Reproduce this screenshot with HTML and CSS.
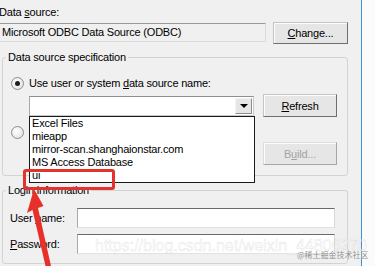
FILE: index.html
```html
<!DOCTYPE html>
<html lang="en">
<head>
    <meta charset="UTF-8">
    <meta name="viewport" content="width=device-width, initial-scale=1.0">
    <title>ODBC Data Source</title>
    <link rel="stylesheet" href="styles.css">
</head>
<body>
    <div class="window">
        <div class="dialog">
            <div class="top-label">Data <u>s</u>ource:</div>
            <div class="source-row">
                <div class="source-field">Microsoft ODBC Data Source (ODBC)</div>
                <button class="btn change-btn"><u>C</u>hange...</button>
            </div>

            <fieldset class="group spec-group">
                <legend>Data source specification</legend>
                <div class="group-body">
                    <div class="radio-row">
                        <span class="radio checked"></span>
                        <span class="radio-label">Use user or system <u>d</u>ata source name:</span>
                    </div>
                    <div class="combo-row">
                        <div class="combo">
                            <div class="combo-text"></div>
                            <div class="combo-arrow"><span class="arrow-down"></span></div>
                            <ul class="combo-list">
                                <li>Excel Files</li>
                                <li>mieapp</li>
                                <li>mirror-scan.shanghaionstar.com</li>
                                <li>MS Access Database</li>
                                <li>ui</li>
                            </ul>
                        </div>
                        <button class="btn side-btn"><u>R</u>efresh</button>
                    </div>
                    <div class="radio-row second">
                        <span class="radio"></span>
                    </div>
                    <div class="combo-row build-row">
                        <div class="hidden-field"></div>
                        <button class="btn side-btn" disabled>B<u>u</u>ild...</button>
                    </div>
                </div>
            </fieldset>

            <fieldset class="group login-group">
                <legend>Login information</legend>
                <div class="group-body">
                    <div class="login-row">
                        <label class="login-label">User <u>n</u>ame:</label>
                        <div class="text-input"></div>
                    </div>
                    <div class="login-row">
                        <label class="login-label"><u>P</u>assword:</label>
                        <div class="text-input"></div>
                    </div>
                </div>
            </fieldset>

            <div class="mark-box"></div>
            <svg class="mark-arrow" width="361" height="266" viewBox="0 0 361 266">
                <path d="M34 189 L27 213 L32.5 210 L45.5 266 L51 266 L38 208 L43.5 206 Z" fill="#e8302a"/>
            </svg>
            <div class="watermark">https://blog.csdn.net/weixin_44806270</div>
        </div>
        <div class="frame-edge"></div>
        <div class="outside"></div>
        <div class="credit">@稀土掘金技术社区</div>
    </div>
</body>
</html>
```

FILE: styles.css
```css
body, html {
    margin: 0;
    padding: 0;
}

body {
    width: 375px;
    height: 266px;
    overflow: hidden;
    background-color: #f0f0f0;
    font-family: "Liberation Sans", Arial, sans-serif;
    font-size: 11px;
    letter-spacing: -0.2px;
    color: #000;
}

.window {
    display: flex;
    height: 266px;
    position: relative;
}

.dialog {
    width: 361px;
    position: relative;
}

.frame-edge {
    width: 1px;
    background-color: #3f8dd8;
}

.outside {
    flex: 1;
    background-color: #fbfbfb;
}

u {
    text-decoration: underline;
    text-underline-offset: 1px;
}

.top-label {
    padding-top: 6px;
    margin-left: -1px;
    line-height: 13px;
}

.source-row {
    display: flex;
    align-items: flex-start;
    margin-top: 3px;
}

.source-field {
    margin-left: -3px;
    margin-top: 1px;
    width: 269px;
    height: 19px;
    box-sizing: border-box;
    border: 1px solid;
    border-color: #9a9a9a #dadada #dadada #b5b5b5;
    background-color: #f0f0f0;
    padding-left: 4px;
    line-height: 17px;
    white-space: nowrap;
}

.btn {
    font-family: inherit;
    font-size: 11px;
    letter-spacing: -0.2px;
    color: #000;
    height: 23px;
    padding: 0;
    box-sizing: border-box;
    border: 1px solid;
    border-color: #c4c4c4 #6f6f6f #6f6f6f #c4c4c4;
    background-color: #e6e6e6;
    box-shadow: inset 1px 1px 0 #fdfdfd;
}

.btn:disabled {
    color: #a3a3a3;
    border-color: #dcdcdc #a6a6a6 #a6a6a6 #dcdcdc;
}

.change-btn {
    margin-left: 7px;
    width: 75px;
    height: 22px;
}

/* group boxes */
.group {
    margin: 6px 0 0 2px;
    width: 346px;
    box-sizing: border-box;
    padding: 0;
    border: 1px solid #d3d3d3;
    border-radius: 3px;
    min-inline-size: 0;
}

.group legend {
    margin-left: 3px;
    padding: 0 2px;
    line-height: 14px;
}

.spec-group .group-body {
    padding: 13px 10px 10px 8px;
}

.radio-row {
    display: flex;
    align-items: center;
    height: 13px;
}

.radio-row.second {
    margin-top: 9px;
}

.radio {
    width: 13px;
    height: 13px;
    box-sizing: border-box;
    border: 1px solid #8d8d8d;
    border-radius: 50%;
    background: radial-gradient(circle at 40% 40%, #ffffff, #dcdcdc);
    display: flex;
    align-items: center;
    justify-content: center;
}

.radio.checked::after {
    content: "";
    width: 5px;
    height: 5px;
    border-radius: 50%;
    background-color: #1c1c1c;
}

.radio-label {
    margin-left: 5px;
    line-height: 13px;
    white-space: nowrap;
}

.combo-row {
    display: flex;
    align-items: flex-start;
    margin-top: 4px;
}

.combo-row.build-row {
    margin-top: 3px;
}

.combo {
    position: relative;
    margin-left: 18px;
    margin-top: 2px;
    width: 225px;
    height: 20px;
    box-sizing: border-box;
    border: 1px solid;
    border-color: #8f8f8f #c9c9c9 #c9c9c9 #a8a8a8;
    background-color: #fff;
    display: flex;
}

.combo-text {
    flex: 1;
}

.combo-arrow {
    width: 17px;
    box-sizing: border-box;
    margin: 1px;
    border: 1px solid;
    border-color: #f4f4f4 #8c8c8c #8c8c8c #f4f4f4;
    background-color: #e6e6e6;
    display: flex;
    align-items: center;
    justify-content: center;
}

.arrow-down {
    width: 0;
    height: 0;
    border-left: 4px solid transparent;
    border-right: 4px solid transparent;
    border-top: 4px solid #000;
}

.combo-list {
    position: absolute;
    top: 19px;
    left: -1px;
    width: 226px;
    box-sizing: border-box;
    margin: 0;
    padding: 0;
    list-style: none;
    border: 1px solid #1a1a1a;
    background-color: #fff;
    z-index: 2;
}

.combo-list li {
    height: 13px;
    line-height: 13px;
    padding-left: 2px;
    white-space: nowrap;
}

.hidden-field {
    margin-left: 18px;
    margin-top: 2px;
    width: 225px;
    height: 20px;
    background-color: #fff;
}

.side-btn {
    margin-left: 9px;
    width: 74px;
}

.login-group {
    margin-top: 7px;
}

.login-group .group-body {
    padding: 11px 12px 9px 7px;
}

.login-row {
    display: flex;
    align-items: center;
    height: 20px;
}

.login-row + .login-row {
    margin-top: 6px;
}

.login-label {
    width: 67px;
    flex-shrink: 0;
    line-height: 13px;
}

.text-input {
    flex: 1;
    height: 20px;
    box-sizing: border-box;
    border: 1px solid;
    border-color: #6a6a6a #d8d8d8 #e2e2e2 #a9a9a9;
    background-color: #fff;
}

/* annotations drawn over the capture */
.mark-box {
    position: absolute;
    left: 23px;
    top: 169px;
    width: 92px;
    height: 21px;
    box-sizing: border-box;
    border: 3px solid #e5322d;
    border-radius: 3px;
    z-index: 3;
}

.mark-arrow {
    position: absolute;
    left: 0;
    top: 0;
    z-index: 3;
}

.watermark {
    position: absolute;
    left: 95px;
    top: 236px;
    font-size: 16px;
    line-height: 20px;
    letter-spacing: 0;
    white-space: nowrap;
    color: rgba(255, 255, 255, 0.6);
    -webkit-text-stroke: 0.5px rgba(160, 160, 160, 0.3);
    z-index: 4;
}

.credit {
    position: absolute;
    left: 297px;
    top: 250px;
    font-family: "Noto Sans CJK SC", sans-serif;
    font-size: 8px;
    line-height: 10px;
    letter-spacing: 0;
    white-space: nowrap;
    color: #8c8c8c;
    text-shadow: 0 0 1px #fff;
    z-index: 4;
}
```
